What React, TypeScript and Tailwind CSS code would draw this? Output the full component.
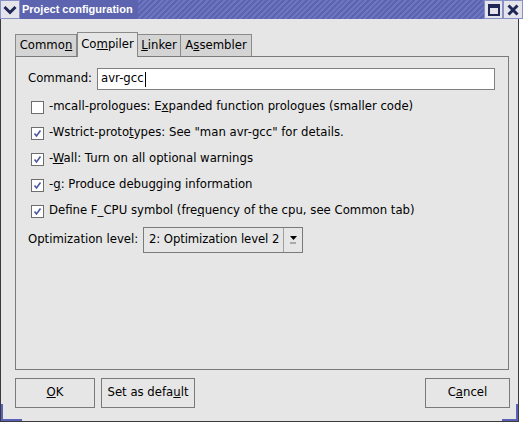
const sans = "font-['DejaVu_Sans','Liberation_Sans',sans-serif]";

function Check({ on }: { on: boolean }) {
  return (
    <span className="flex h-[13px] w-[13px] shrink-0 items-center justify-center border border-[#6e6e6e] bg-white">
      {on && (
        <svg width="9" height="9" viewBox="0 0 9 9">
          <path d="M1.5 4.5 L3.5 7 L7.5 1.5" fill="none" stroke="#4a58a0" strokeWidth="1.6" />
        </svg>
      )}
    </span>
  );
}

function Row({ on, children }: { on: boolean; children: React.ReactNode }) {
  return (
    <div className="flex h-[26px] items-center gap-[5px] pl-[3px]">
      <Check on={on} />
      <span>{children}</span>
    </div>
  );
}

function Tab({ w, active, children }: { w: string; active?: boolean; children: React.ReactNode }) {
  return (
    <div
      className={
        active
          ? `${w} relative z-10 -mb-px flex h-[25px] items-center justify-center border border-b-0 border-[#8a8a8a] bg-[#e6e6e6] pb-[1px]`
          : `${w} flex h-[22px] items-center justify-center border border-b-0 border-[#8a8a8a] bg-[#d4d4d4] pt-[1px] -ml-px first:ml-0`
      }
    >
      {children}
    </div>
  );
}

function Btn({ w, children }: { w: string; children: React.ReactNode }) {
  return (
    <button className={`${w} h-[30px] border border-[#7a7a7a] bg-[#e6e6e6] text-black`}>{children}</button>
  );
}

export default function App() {
  return (
    <div className={`h-[427px] w-[523px] overflow-hidden bg-white text-[11.7px] text-black ${sans}`}>
      {/* title bar */}
      <div className="flex h-[19px] w-[523px] bg-[repeating-linear-gradient(135deg,#5c64b0_0px,#5c64b0_2px,#6c75bf_2px,#6c75bf_4px)]">
        <div className="flex h-[19px] w-[20px] items-center justify-center border border-[#8890c8] bg-[#e4e4ea]">
          <svg width="14" height="10" viewBox="0 0 14 10">
            <path d="M1.5 2 L7 7.5 L12.5 2" fill="none" stroke="#1e2756" strokeWidth="3" />
          </svg>
        </div>
        <div className="flex items-center bg-[#5c64b0] pl-[2px] pr-[5px] font-['Liberation_Sans',sans-serif] text-[11px] font-bold text-white">
          Project configuration
        </div>
        <div className="flex-1" />
        <div className="flex h-[19px] w-[19px] items-center justify-center border border-[#8890c8] bg-[#e4e4ea]">
          <svg width="12" height="12" viewBox="0 0 12 12">
            <rect x="1" y="1" width="10" height="10" fill="none" stroke="#1e2756" strokeWidth="2" />
            <rect x="1" y="1" width="10" height="3" fill="#1e2756" />
          </svg>
        </div>
        <div className="flex h-[19px] w-[20px] items-center justify-center border border-[#8890c8] bg-[#e4e4ea]">
          <svg width="12" height="12" viewBox="0 0 12 12">
            <path d="M1.5 1.5 L10.5 10.5 M10.5 1.5 L1.5 10.5" stroke="#1e2756" strokeWidth="3" />
          </svg>
        </div>
      </div>

      {/* body */}
      <div className="relative flex h-[403px] w-[519px] flex-col border-x border-b border-[#3a3a3a] bg-[#e6e6e6] pl-[14px] pt-[13px]">
        <div className="flex h-[24px] items-end">
          <Tab w="w-[62px]">
            Commo<u>n</u>
          </Tab>
          <Tab w="w-[61px]" active>
            Co<u>m</u>piler
          </Tab>
          <Tab w="w-[44px]">
            <u>L</u>inker
          </Tab>
          <Tab w="w-[72px]">
            A<u>s</u>sembler
          </Tab>
        </div>

        <div className="flex h-[314px] w-[494px] flex-col border border-[#7a7a7a] bg-[#e6e6e6] pl-[12px] pr-[12px] pt-[11px]">
          <div className="flex h-[22px] items-center">
            <span className="w-[69px]">Command:</span>
            <div className="flex h-[22px] w-[398px] items-center border border-[#7f7f7f] bg-white pl-[3px]">
              avr-gcc
              <span className="ml-px h-[15px] w-px bg-black" />
            </div>
          </div>

          <div className="mt-[4px] flex flex-col">
            <Row on={false}>
              -mcall-prologues: E<u>x</u>panded function prologues (smaller code)
            </Row>
            <Row on>
              -Wstrict-proto<u>t</u>ypes: See "man avr-gcc" for details.
            </Row>
            <Row on>
              -<u>W</u>all: Turn on all optional warnings
            </Row>
            <Row on>
              -<u>g</u>: Produce debugging information
            </Row>
            <Row on>
              Define F_CPU symbol (fre<u>q</u>uency of the cpu, see Common tab)
            </Row>
          </div>

          <div className="mt-[3px] flex items-center">
            <span className="w-[115px]">Optimization level:</span>
            <div className="flex h-[26px] w-[160px] items-center border border-[#7a7a7a] bg-[#e6e6e6]">
              <span className="flex-1 whitespace-nowrap pl-[5px] tracking-[-0.1px]">2: Optimization level 2</span>
              <div className="flex h-full w-[19px] shrink-0 flex-col items-center justify-center gap-[2px] border-l border-[#a0a0a0]">
                <svg width="7" height="4" viewBox="0 0 7 4">
                  <path d="M0 0 L7 0 L3.5 4 Z" fill="#000" />
                </svg>
                <span className="h-[2px] w-[6px] bg-[#a8a8a8]" />
              </div>
            </div>
          </div>
        </div>

        <div className="mt-[8px] flex w-[494px]">
          <Btn w="w-[80px]">
            <u>O</u>K
          </Btn>
          <Btn w="w-[94px] ml-[6px]">
            Set as defa<u>u</u>lt
          </Btn>
          <div className="flex-1" />
          <Btn w="w-[85px] -mr-px">
            C<u>a</u>ncel
          </Btn>
        </div>

        {/* frame corner accents */}
        <span className="absolute bottom-0 left-0 h-[17px] w-[2px] bg-[#5a62b8]" />
        <span className="absolute bottom-0 left-0 h-[2px] w-[21px] bg-[#5a62b8]" />
        <span className="absolute bottom-0 right-0 h-[17px] w-[2px] bg-[#5a62b8]" />
        <span className="absolute bottom-0 right-0 h-[2px] w-[16px] bg-[#5a62b8]" />
      </div>
    </div>
  );
}
